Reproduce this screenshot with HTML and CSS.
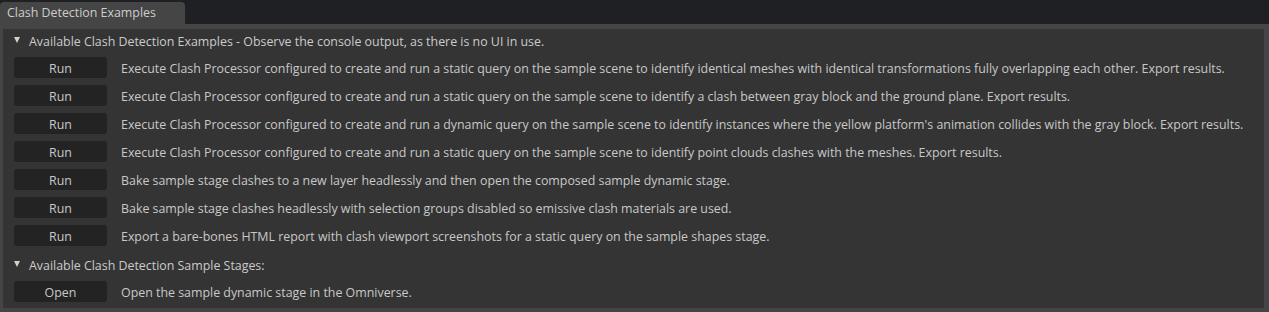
FILE: index.html
```html
<!DOCTYPE html>
<html lang="en">
<head>
  <meta charset="UTF-8">
  <title>Clash Detection Examples</title>
  <link rel="stylesheet" href="styles.css">
</head>
<body>
  <div class="tab-bar">
    <div class="tab">Clash Detection Examples</div>
  </div>
  <div class="frame">
    <div class="panel">
      <div class="section-head"><span class="arrow"></span>Available Clash Detection Examples - Observe the console output, as there is no UI in use.</div>
      <div class="row"><button class="btn">Run</button><span class="desc">Execute Clash Processor configured to create and run a static query on the sample scene to identify identical meshes with identical transformations fully overlapping each other. Export results.</span></div>
      <div class="row"><button class="btn">Run</button><span class="desc">Execute Clash Processor configured to create and run a static query on the sample scene to identify a clash between gray block and the ground plane. Export results.</span></div>
      <div class="row"><button class="btn">Run</button><span class="desc">Execute Clash Processor configured to create and run a dynamic query on the sample scene to identify instances where the yellow platform's animation collides with the gray block. Export results.</span></div>
      <div class="row"><button class="btn">Run</button><span class="desc">Execute Clash Processor configured to create and run a static query on the sample scene to identify point clouds clashes with the meshes. Export results.</span></div>
      <div class="row"><button class="btn">Run</button><span class="desc">Bake sample stage clashes to a new layer headlessly and then open the composed sample dynamic stage.</span></div>
      <div class="row"><button class="btn">Run</button><span class="desc">Bake sample stage clashes headlessly with selection groups disabled so emissive clash materials are used.</span></div>
      <div class="row"><button class="btn">Run</button><span class="desc">Export a bare-bones HTML report with clash viewport screenshots for a static query on the sample shapes stage.</span></div>
      <div class="section-head second"><span class="arrow"></span>Available Clash Detection Sample Stages:</div>
      <div class="row"><button class="btn">Open</button><span class="desc">Open the sample dynamic stage in the Omniverse.</span></div>
    </div>
  </div>
</body>
</html>
```

FILE: styles.css
```css
html, body {
  margin: 0;
  height: 100%;
}

body {
  background: #1f2024;
  font-family: "Open Sans", "DejaVu Sans", sans-serif;
  font-size: 12.4px;
  color: #c8c8c8;
  display: flex;
  flex-direction: column;
  overflow: hidden;
}

.tab-bar {
  height: 22px;
  padding-top: 2px;
  display: flex;
}

.tab {
  width: 178px;
  padding-left: 7px;
  background: #454545;
  border-radius: 4px 4px 0 0;
  line-height: 22px;
  color: #cdcdcd;
}

.frame {
  flex: 1;
  background: #454545;
  padding: 5px 5px 4px 3px;
  display: flex;
}

.panel {
  flex: 1;
  background: #343434;
}

.section-head {
  height: 24px;
  display: flex;
  align-items: center;
  padding-left: 11px;
  color: #cbcbcb;
}

.section-head.second {
  margin-top: 4px;
}

.arrow {
  width: 0;
  height: 0;
  border-left: 3.5px solid transparent;
  border-right: 3.5px solid transparent;
  border-top: 6px solid #d2d2d2;
  margin: 0 9px 3px 0;
}

.row {
  height: 28px;
  display: flex;
  align-items: center;
  padding-left: 11px;
}

.btn {
  box-sizing: border-box;
  width: 93px;
  height: 21px;
  padding: 2px 0 0;
  border: none;
  border-radius: 3px;
  background: #232323;
  color: #c8c8c8;
  font: inherit;
  margin-right: 14px;
}

.desc {
  white-space: nowrap;
  padding-top: 2px;
}
```
